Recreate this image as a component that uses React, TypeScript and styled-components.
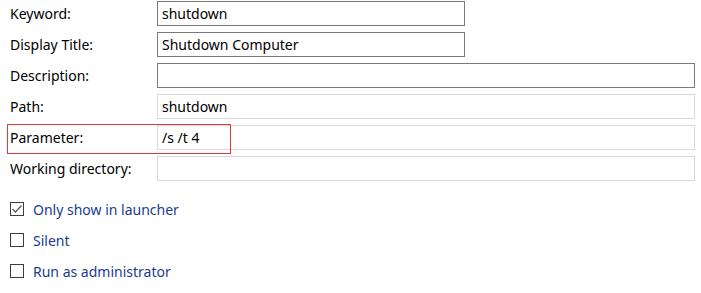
import styled, { createGlobalStyle } from 'styled-components'

const GlobalStyle = createGlobalStyle`
  html, body {
    margin: 0;
    background: #ffffff;
  }
  body {
    font-family: "Noto Sans", "Open Sans", sans-serif;
    font-size: 14px;
    color: #000;
  }
`

const Page = styled.div`
  width: 701px;
  height: 293px;
  padding: 1px 0 0 10px;
  box-sizing: border-box;
`

const Form = styled.div`
  display: grid;
  grid-template-columns: 147px 538px;
  grid-auto-rows: 25px;
  row-gap: 6px;
  align-items: center;
`

const Label = styled.label`
  position: relative;
  line-height: 25px;
  height: 25px;
  white-space: nowrap;
`

const Field = styled.input<{ $short?: boolean; $strong?: boolean }>`
  box-sizing: border-box;
  width: ${p => (p.$short ? '308px' : '538px')};
  height: 25px;
  padding: 0 4px;
  margin: 0;
  border: 1px solid ${p => (p.$strong ? '#7a7a7a' : '#d9d9d9')};
  font: inherit;
  font-size: 14px;
  color: #000;
  background: #fff;
  outline: none;
`

const Highlight = styled.div`
  position: absolute;
  left: -3px;
  top: -1px;
  width: 224px;
  height: 30px;
  box-sizing: border-box;
  border: 1px solid #e03a3a;
  pointer-events: none;
`

const Options = styled.div`
  display: flex;
  flex-direction: column;
  gap: 13px;
  margin-top: 19px;
`

const Option = styled.label`
  display: flex;
  align-items: center;
  gap: 9px;
  height: 18px;
  color: #1b3a92;
`

const Box = styled.span`
  box-sizing: border-box;
  width: 14px;
  height: 14px;
  border: 1px solid #3c3c3c;
  background: #fff;
  display: flex;
  align-items: center;
  justify-content: center;
`

function CheckOption({ label, checked }: { label: string; checked?: boolean }) {
  return (
    <Option>
      <Box>
        {checked ? (
          <svg width="12" height="12" viewBox="0 0 12 12">
            <path d="M1.5 6 L4.5 9 L10.5 2.5" fill="none" stroke="#5a5a5a" strokeWidth="1.3" />
          </svg>
        ) : null}
      </Box>
      {label}
    </Option>
  )
}

export default function App() {
  return (
    <Page>
      <GlobalStyle />
      <Form>
        <Label>Keyword:</Label>
        <Field $short $strong defaultValue="shutdown" />
        <Label>Display Title:</Label>
        <Field $short $strong defaultValue="Shutdown Computer" />
        <Label>Description:</Label>
        <Field $strong defaultValue="" />
        <Label>Path:</Label>
        <Field defaultValue="shutdown" />
        <Label>
          Parameter:
          <Highlight />
        </Label>
        <Field defaultValue="/s /t 4" />
        <Label>Working directory:</Label>
        <Field defaultValue="" />
      </Form>
      <Options>
        <CheckOption label="Only show in launcher" checked />
        <CheckOption label="Silent" />
        <CheckOption label="Run as administrator" />
      </Options>
    </Page>
  )
}
